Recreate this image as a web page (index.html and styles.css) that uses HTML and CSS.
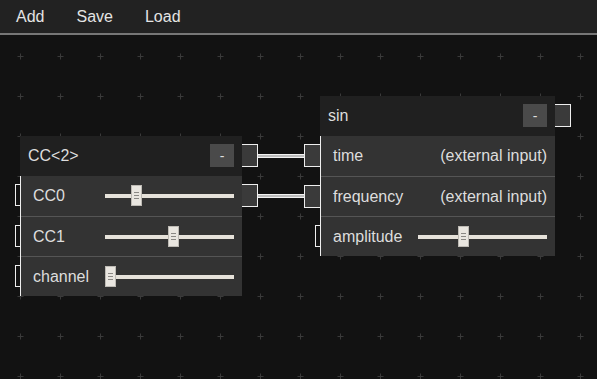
FILE: index.html
```html
<!DOCTYPE html>
<html lang="en">
<head>
    <meta charset="UTF-8">
    <title>Patch Editor</title>
    <link rel="stylesheet" href="styles.css">
</head>
<body>
    <!-- Menu bar -->
    <div class="menu">
        <button class="menu-item">Add</button>
        <button class="menu-item">Save</button>
        <button class="menu-item">Load</button>
    </div>

    <!-- Canvas -->
    <div class="canvas">
        <svg class="grid" width="100%" height="100%">
            <defs>
                <pattern id="cross" x="20" y="21" width="40" height="40" patternUnits="userSpaceOnUse">
                    <path d="M-2.5 0.5H3.5M0.5 -2.5V3.5" stroke="#3a3a3a" stroke-width="1"/>
                    <path d="M37.5 0.5H40M0.5 37.5V40" stroke="#3a3a3a" stroke-width="1"/>
                </pattern>
            </defs>
            <rect width="100%" height="100%" fill="url(#cross)"/>
        </svg>

        <!-- Wires -->
        <div class="wire" style="left:258px; top:119px; width:46px;"></div>
        <div class="wire" style="left:258px; top:159px; width:46px;"></div>

        <!-- CC<2> node -->
        <div class="node" style="left:20px; top:101px; width:222px;">
            <div class="node-header">
                <span class="node-title">CC&lt;2&gt;</span>
                <button class="node-btn">-</button>
                <div class="port-out" style="top:8px;"></div>
                <div class="port-out" style="top:48px;"></div>
            </div>
            <div class="node-body">
                <div class="row">
                    <div class="port-in"></div>
                    <span class="label label-cc">CC0</span>
                    <div class="slider"><div class="thumb" style="--v:0.22"><i></i><i></i><i></i></div></div>
                </div>
                <div class="row">
                    <div class="port-in"></div>
                    <span class="label label-cc">CC1</span>
                    <div class="slider"><div class="thumb" style="--v:0.535"><i></i><i></i><i></i></div></div>
                </div>
                <div class="row">
                    <div class="port-in"></div>
                    <span class="label label-cc">channel</span>
                    <div class="slider"><div class="thumb" style="--v:0"><i></i><i></i><i></i></div></div>
                </div>
            </div>
        </div>

        <!-- sin node -->
        <div class="node" style="left:320px; top:61px; width:235px;">
            <div class="node-header">
                <span class="node-title">sin</span>
                <button class="node-btn">-</button>
                <div class="port-out" style="top:8px;"></div>
            </div>
            <div class="node-body">
                <div class="row">
                    <div class="port-in connected"></div>
                    <span class="label">time</span>
                    <span class="value">(external input)</span>
                </div>
                <div class="row">
                    <div class="port-in connected"></div>
                    <span class="label">frequency</span>
                    <span class="value">(external input)</span>
                </div>
                <div class="row">
                    <div class="port-in"></div>
                    <span class="label label-sin">amplitude</span>
                    <div class="slider"><div class="thumb" style="--v:0.34"><i></i><i></i><i></i></div></div>
                </div>
            </div>
        </div>
    </div>
</body>
</html>
```

FILE: styles.css
```css
/* General */
body {
    margin: 0;
    font-family: "Liberation Sans", Arial, sans-serif;
    font-size: 16px;
    color: #ddd;
    background-color: #121212;
    height: 379px;
    display: flex;
    flex-direction: column;
    overflow: hidden;
}

/* Menu bar */
.menu {
    height: 33px;
    background-color: #222;
    border-bottom: 2px solid #777;
    display: flex;
    align-items: center;
}

.menu-item {
    background: none;
    border: none;
    color: #e4e4e4;
    font: inherit;
    padding: 0 16px;
    height: 100%;
    cursor: pointer;
}

/* Canvas */
.canvas {
    position: relative;
    flex-grow: 1;
    background-color: #121212;
}

.grid {
    position: absolute;
    inset: 0;
}

.wire {
    position: absolute;
    height: 2px;
    background-color: #bdbdbd;
    border-top: 1px solid #f2f2f2;
    border-bottom: 1px solid #f2f2f2;
}

/* Nodes */
.node {
    position: absolute;
}

.node-header {
    position: relative;
    height: 40px;
    background-color: #202020;
    display: flex;
    align-items: center;
    padding: 0 8px;
}

.node-title {
    flex-grow: 1;
}

.node-btn {
    width: 24px;
    height: 23px;
    margin-top: -1px;
    border: none;
    background-color: #4a4a4a;
    color: #ddd;
    font: inherit;
    font-size: 14px;
    padding: 0;
}

.node-body {
    background-color: #333;
    border-left: 1px solid #eee;
}

.row {
    position: relative;
    height: 40px;
    display: flex;
    align-items: center;
    padding: 0 8px 0 12px;
}

.row + .row {
    border-top: 1px solid #555;
    height: 39px;
}

.label {
    white-space: nowrap;
}

.label-cc {
    width: 72px;
}

.label-sin {
    width: 85px;
}

.value {
    margin-left: auto;
}

/* Ports */
.port-out {
    position: absolute;
    right: -16px;
    width: 15px;
    height: 21px;
    background-color: #3a3a3a;
    border: 1px solid #eee;
    border-left: none;
}

.port-in {
    position: absolute;
    left: -6px;
    top: 8px;
    width: 4px;
    height: 20px;
    border: 1px solid #eee;
    border-right: none;
}

.port-in.connected {
    left: -17px;
    width: 15px;
    height: 21px;
    background-color: #3a3a3a;
}

/* Sliders */
.slider {
    position: relative;
    flex-grow: 1;
    height: 4px;
    background-color: #e6e2da;
}

.thumb {
    position: absolute;
    top: -9px;
    left: calc(var(--v) * (100% - 11px));
    width: 9px;
    height: 19px;
    background-color: #e9e6e0;
    border: 1px solid #bdbab4;
    display: flex;
    flex-direction: column;
    align-items: center;
    justify-content: center;
    gap: 2px;
}

.thumb i {
    display: block;
    width: 5px;
    height: 1px;
    background-color: #8a8884;
}
```
